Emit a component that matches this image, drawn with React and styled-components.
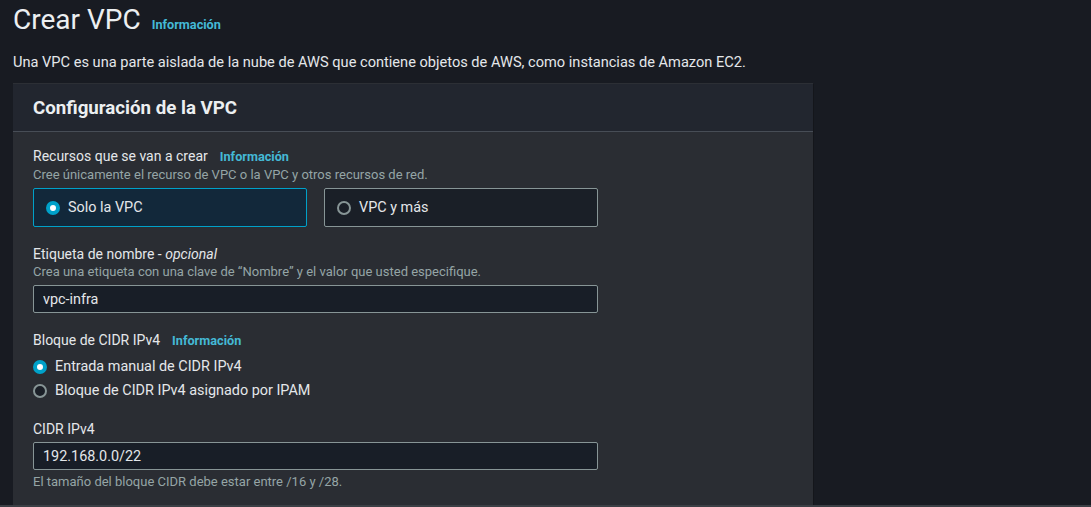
import React, { useState } from 'react';
import styled, { createGlobalStyle } from 'styled-components';

const GlobalStyle = createGlobalStyle`
  html, body {
    margin: 0;
    padding: 0;
    background-color: #181b22;
  }
  body {
    font-family: Roboto, "Liberation Sans", Arial, sans-serif;
    color: #d5dbdb;
  }
`;

const Page = styled.div`
  height: 507px;
  overflow: hidden;
  box-sizing: border-box;
  padding: 0 13px;
  border-bottom: 2px solid #3b3f45;
`;

const TitleRow = styled.div`
  display: flex;
  align-items: baseline;
  gap: 11px;
  padding-top: 1px;
`;

const Title = styled.h1`
  margin: 0;
  font-size: 28px;
  font-weight: 400;
  color: #eceff1;
  line-height: 38px;
`;

const InfoLink = styled.a`
  font-size: 12.7px;
  font-weight: 700;
  color: #44b9d6;
  text-decoration: none;
  cursor: pointer;
`;

const Lead = styled.p`
  margin: 13px 0 12px;
  font-size: 14.6px;
  line-height: 20px;
  color: #e4e7ea;
`;

const Card = styled.section`
  width: 800px;
  background-color: #2a2d33;
  box-shadow: 1px 0 0 #14161b, 0 -1px 0 #2c2f35;
`;

const CardHeader = styled.header`
  height: 47px;
  display: flex;
  align-items: center;
  padding: 0 20px;
  background-color: #22262f;
  border-bottom: 1px solid #474d56;
`;

const CardTitle = styled.h2`
  margin: 0;
  font-size: 18.7px;
  font-weight: 700;
  color: #eceff1;
`;

const CardBody = styled.div`
  padding: 15px 20px 20px;
  width: 565px;
  display: flex;
  flex-direction: column;
  gap: 18px;
`;

const Field = styled.div`
  display: flex;
  flex-direction: column;
  margin-top: ${p => p.$extra || 0}px;
`;

const LabelRow = styled.div`
  display: flex;
  align-items: baseline;
  gap: 12px;
  font-size: 14px;
  line-height: 18px;
  color: #e4e7ea;
`;

const Hint = styled.div`
  font-size: 13px;
  line-height: 18px;
  color: #95a5a6;
  margin-top: ${p => (p.$below ? '3px' : '0')};
`;

const Tiles = styled.div`
  display: grid;
  grid-template-columns: 1fr 1fr;
  gap: 17px;
  margin-top: 4px;
`;

const Tile = styled.label`
  height: 39px;
  box-sizing: border-box;
  display: flex;
  align-items: center;
  gap: 8px;
  padding: 0 12px;
  border: 1px solid ${p => (p.$active ? '#00a1c9' : '#879596')};
  background-color: ${p => (p.$active ? '#12283a' : '#1a1f27')};
  border-radius: 2px;
  font-size: 14.4px;
  color: #e4e7ea;
  cursor: pointer;
`;

const RadioDot = styled.span`
  width: 14px;
  height: 14px;
  box-sizing: border-box;
  border-radius: 50%;
  flex-shrink: 0;
  border: ${p => (p.$on ? '4px solid #00a1c9' : '2px solid #879596')};
  background-color: ${p => (p.$on ? '#ffffff' : '#1a1f27')};
`;

const RadioList = styled.div`
  display: flex;
  flex-direction: column;
  gap: 6px;
  margin-top: 8px;
`;

const RadioItem = styled.label`
  display: flex;
  align-items: center;
  gap: 8px;
  font-size: 14.4px;
  line-height: 18px;
  color: #e4e7ea;
  cursor: pointer;
`;

const Input = styled.input`
  margin-top: 4px;
  height: 28px;
  box-sizing: border-box;
  width: 100%;
  padding: 0 9px;
  border: 1px solid #879596;
  border-radius: 2px;
  background-color: #181e27;
  color: #e4e7ea;
  font-family: inherit;
  font-size: 14.4px;
  outline: none;
`;

export default function App() {
  const [resource, setResource] = useState('solo');
  const [cidrMode, setCidrMode] = useState('manual');
  const [name, setName] = useState('vpc-infra');
  const [cidr, setCidr] = useState('192.168.0.0/22');

  return (
    <>
      <GlobalStyle />
      <Page>
        <TitleRow>
          <Title>Crear VPC</Title>
          <InfoLink>Información</InfoLink>
        </TitleRow>
        <Lead>
          Una VPC es una parte aislada de la nube de AWS que contiene objetos de AWS, como instancias de Amazon EC2.
        </Lead>

        <Card>
          <CardHeader>
            <CardTitle>Configuración de la VPC</CardTitle>
          </CardHeader>
          <CardBody>
            <Field>
              <LabelRow>
                Recursos que se van a crear <InfoLink>Información</InfoLink>
              </LabelRow>
              <Hint>Cree únicamente el recurso de VPC o la VPC y otros recursos de red.</Hint>
              <Tiles>
                <Tile $active={resource === 'solo'} onClick={() => setResource('solo')}>
                  <RadioDot $on={resource === 'solo'} />
                  Solo la VPC
                </Tile>
                <Tile $active={resource === 'mas'} onClick={() => setResource('mas')}>
                  <RadioDot $on={resource === 'mas'} />
                  VPC y más
                </Tile>
              </Tiles>
            </Field>

            <Field>
              <LabelRow>
                <span>Etiqueta de nombre - <i>opcional</i></span>
              </LabelRow>
              <Hint>Crea una etiqueta con una clave de “Nombre” y el valor que usted especifique.</Hint>
              <Input value={name} onChange={e => setName(e.target.value)} />
            </Field>

            <Field>
              <LabelRow>
                Bloque de CIDR IPv4 <InfoLink>Información</InfoLink>
              </LabelRow>
              <RadioList>
                <RadioItem onClick={() => setCidrMode('manual')}>
                  <RadioDot $on={cidrMode === 'manual'} />
                  Entrada manual de CIDR IPv4
                </RadioItem>
                <RadioItem onClick={() => setCidrMode('ipam')}>
                  <RadioDot $on={cidrMode === 'ipam'} />
                  Bloque de CIDR IPv4 asignado por IPAM
                </RadioItem>
              </RadioList>
            </Field>

            <Field $extra={2}>
              <LabelRow>CIDR IPv4</LabelRow>
              <Input value={cidr} onChange={e => setCidr(e.target.value)} />
              <Hint $below>El tamaño del bloque CIDR debe estar entre /16 y /28.</Hint>
            </Field>
          </CardBody>
        </Card>
      </Page>
    </>
  );
}
